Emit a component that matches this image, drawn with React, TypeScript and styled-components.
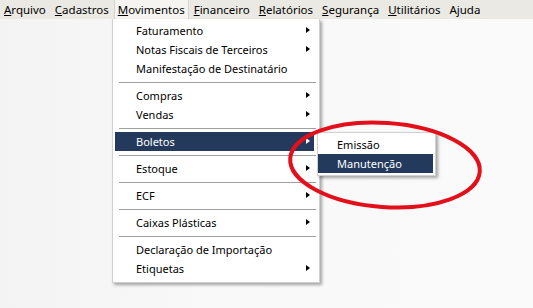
import React from "react";
import styled, { createGlobalStyle } from "styled-components";

const GlobalStyle = createGlobalStyle`
  html, body {
    margin: 0;
    padding: 0;
    background: #f7f7f7;
  }
  body {
    font-family: "Noto Sans", "Open Sans", sans-serif;
    font-size: 11px;
    color: #000;
  }
`;

const Screen = styled.div`
  position: relative;
  width: 533px;
  height: 308px;
  overflow: hidden;
  background: linear-gradient(90deg, #f3f3f3 0%, #f9f9f9 40%, #fafafa 100%);
`;

const MenuBar = styled.div`
  display: flex;
  align-items: stretch;
  gap: 1px;
  height: 19px;
  background: #ebe9e3;
  font-size: 11.5px;
`;

const BarItem = styled.div<{ $open?: boolean }>`
  display: flex;
  align-items: center;
  padding: 0 4px;
  white-space: nowrap;
  line-height: 19px;
  background: ${(p) => (p.$open ? "#f5f4f0" : "transparent")};
  box-shadow: ${(p) =>
    p.$open ? "inset 1px 0 0 #d6d4cf, inset -1px 0 0 #d6d4cf" : "none"};

  u {
    text-decoration: underline;
    text-underline-offset: 1px;
  }
`;

const Dropdown = styled.div`
  position: absolute;
  left: 112px;
  top: 19px;
  width: 206px;
  padding: 2px 0 4px;
  background: #ffffff;
  border: 1px solid #d0d0d0;
  border-top: none;
  box-shadow: 2px 2px 3px rgba(0, 0, 0, 0.35);
`;

const Item = styled.div<{ $active?: boolean }>`
  position: relative;
  display: flex;
  align-items: center;
  height: 19px;
  margin: 0 5px 0 2px;
  padding-left: 21px;
  white-space: nowrap;
  background: ${(p) => (p.$active ? "#243a5c" : "transparent")};
  color: ${(p) => (p.$active ? "#ffffff" : "#000000")};
`;

const Arrow = styled.span<{ $light?: boolean }>`
  position: absolute;
  right: 4px;
  top: 6px;
  width: 0;
  height: 0;
  border-top: 3.5px solid transparent;
  border-bottom: 3.5px solid transparent;
  border-left: 4px solid ${(p) => (p.$light ? "#ffffff" : "#000000")};
`;

const Separator = styled.div`
  height: 8px;
  display: flex;
  align-items: center;
  padding: 0 3px 0 6px;

  &::after {
    content: "";
    flex: 1;
    height: 1px;
    background: #a0a0a0;
  }
`;

const SubMenu = styled.div`
  position: absolute;
  left: 317px;
  top: 132px;
  width: 117px;
  padding: 2px 0;
  background: #ffffff;
  border: 1px solid #d0d0d0;
  box-shadow: 2px 2px 3px rgba(0, 0, 0, 0.35);
`;

const SubItem = styled.div<{ $active?: boolean }>`
  display: flex;
  align-items: center;
  height: 19px;
  margin-right: 2px;
  padding-left: 19px;
  white-space: nowrap;
  background: ${(p) => (p.$active ? "#243a5c" : "transparent")};
  color: ${(p) => (p.$active ? "#ffffff" : "#000000")};
`;

const Mark = styled.svg`
  position: absolute;
  left: 0;
  top: 0;
  pointer-events: none;
`;

type Entry = { label: string; sub?: boolean; active?: boolean } | "sep";

const entries: Entry[] = [
  { label: "Faturamento", sub: true },
  { label: "Notas Fiscais de Terceiros", sub: true },
  { label: "Manifestação de Destinatário" },
  "sep",
  { label: "Compras", sub: true },
  { label: "Vendas", sub: true },
  "sep",
  { label: "Boletos", sub: true, active: true },
  "sep",
  { label: "Estoque", sub: true },
  "sep",
  { label: "ECF", sub: true },
  "sep",
  { label: "Caixas Plásticas", sub: true },
  "sep",
  { label: "Declaração de Importação" },
  { label: "Etiquetas", sub: true },
];

const bar = [
  ["A", "rquivo"],
  ["C", "adastros"],
  ["M", "ovimentos"],
  ["F", "inanceiro"],
  ["R", "elatórios"],
  ["S", "egurança"],
  ["U", "tilitários"],
  ["", "Ajuda"],
];

export default function App() {
  return (
    <>
      <GlobalStyle />
      <Screen>
        <MenuBar>
          {bar.map(([k, rest]) => (
            <BarItem key={k + rest} $open={k === "M"}>
              {k && <u>{k}</u>}
              {rest}
            </BarItem>
          ))}
        </MenuBar>

        <Dropdown>
          {entries.map((e, i) =>
            e === "sep" ? (
              <Separator key={i} />
            ) : (
              <Item key={i} $active={e.active}>
                {e.label}
                {e.sub && <Arrow $light={e.active} />}
              </Item>
            )
          )}
        </Dropdown>

        <SubMenu>
          <SubItem>Emissão</SubItem>
          <SubItem $active>Manutenção</SubItem>
        </SubMenu>

        <Mark width="533" height="308" viewBox="0 0 533 308">
          <ellipse
            cx="385"
            cy="165"
            rx="95"
            ry="42"
            transform="rotate(4 385 165)"
            fill="none"
            stroke="#e3101c"
            strokeWidth="4"
          />
        </Mark>
      </Screen>
    </>
  );
}
